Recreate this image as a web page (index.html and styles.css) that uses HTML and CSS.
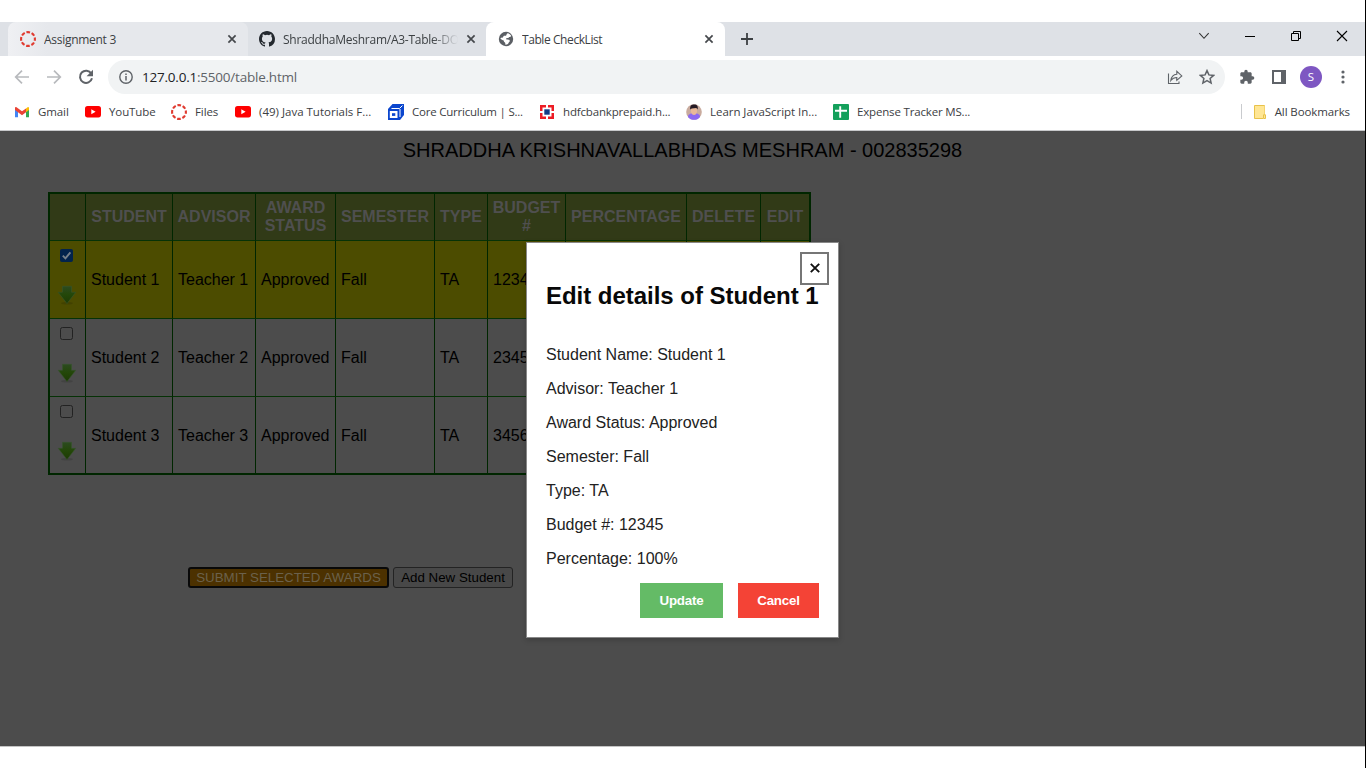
FILE: index.html
```html
<!DOCTYPE html>
<html lang="en">
<head>
<meta charset="utf-8">
<title>Table CheckList</title>
<link rel="stylesheet" href="styles.css">
</head>
<body>
<svg width="0" height="0" class="defs">
  <defs>
    <linearGradient id="leaf" x1="0" y1="0" x2="0" y2="1"><stop offset="0" stop-color="#2c4a20"/><stop offset=".5" stop-color="#234708"/><stop offset="1" stop-color="#1d3a05"/></linearGradient>
    <symbol id="ring" viewBox="0 0 16 16"><circle cx="8" cy="8" r="6.9" fill="none" stroke="#e03a2f" stroke-width="2.1" stroke-dasharray="3.7 1.72" stroke-dashoffset="1.85"/></symbol>
    <symbol id="yt" viewBox="0 0 16 12"><rect width="16" height="11.4" rx="2.6" fill="#f00"/><path d="M6.3 3.2v5l4.3-2.5z" fill="#fff"/></symbol>
    <symbol id="close" viewBox="0 0 10 10"><path d="M1.4 1.4l7.200 7.200M8.600 1.400L1.400 8.600" stroke="#45484c" stroke-width="1.700"/></symbol>
    <symbol id="down" viewBox="0 0 20 20"><ellipse cx="10" cy="18.200" rx="6" ry="1.400" fill="#000" opacity=".12"/><path d="M5.500 1.300h9v6h4.200L10 18.600 1.200 7.300h4.300z" fill="url(#leaf)" stroke="#36542b" stroke-width=".6"/></symbol>
  </defs>
</svg>
<div class="screen">
  <header class="tabs">
    <div class="tab first"><svg class="i16"><use href="#ring"/></svg><span class="t-assign">Assignment 3</span><svg class="x"><use href="#close"/></svg></div>
    <div class="tab second"><svg class="i16" viewBox="0 0 16 16"><path fill="#24292f" d="M8 0C3.58 0 0 3.58 0 8c0 3.54 2.29 6.53 5.47 7.59.4.07.55-.17.55-.38 0-.19-.01-.82-.01-1.49-2.01.37-2.53-.49-2.69-.94-.09-.23-.48-.94-.82-1.13-.28-.15-.68-.52-.01-.53.63-.01 1.08.58 1.23.82.72 1.21 1.87.87 2.33.66.07-.52.28-.87.51-1.07-1.78-.2-3.64-.89-3.64-3.95 0-.87.31-1.59.82-2.15-.08-.2-.36-1.02.08-2.12 0 0 .67-.21 2.2.82a7.6 7.6 0 014 0c1.53-1.04 2.2-.82 2.2-.82.44 1.1.16 1.92.08 2.12.51.56.82 1.27.82 2.15 0 3.07-1.87 3.75-3.65 3.95.29.25.54.73.54 1.48 0 1.07-.01 1.93-.01 2.2 0 .21.15.46.55.38A8.01 8.01 0 0016 8c0-4.42-3.58-8-8-8z"/></svg><span class="t-repo">ShraddhaMeshram/A3-Table-DOM</span><svg class="x"><use href="#close"/></svg></div>
    <div class="tab active"><svg class="i16" viewBox="0 0 16 16"><circle cx="8" cy="8" r="7.200" fill="#5b5f64"/><path d="M10 2.300c1.300.4 2.400 1.300 3.200 2.500-.3 1.200-1.200 1.200-2 1.300-.4 1.100-1.300 1-2.700 1.200-.8.300-.5 1.200.3 1.200 1.500 0 2.800.2 3 1.300.2 1.200-1.100 1.200-1.300 2.200-.3 1.100-1.700 1.800-3 1.700-.5-.7.200-1.500-.6-2.200-.9-.5-1.300-1.200-1.100-2.100-1.300 0-2.400-.6-3.500-2.100.4-1 1.600-.5 2.500-.9.7-.5.400-1.400 1.300-1.700.9-.1 1.500.3 2.100-.3.500-.6.300-1.800 1.800-2.100z" fill="#fff"/></svg><span class="t-table">Table CheckList</span><svg class="x"><use href="#close"/></svg></div>
    <svg class="plus" viewBox="0 0 12 12"><path d="M6 0v12M0 6h12" stroke="#3c4043" stroke-width="1.8"/></svg>
    <div class="win">
      <svg viewBox="0 0 12 8"><path d="M1.300 1.200L6 6.300l4.700-5.100" fill="none" stroke="#333" stroke-width="1.100"/></svg>
      <svg viewBox="0 0 12 8"><path d="M1 4.500h10" stroke="#000"/></svg>
      <svg viewBox="0 0 12 12"><path d="M1.500 3.500h7v7h-7zM3.500 3.500v-2h7v7h-2" fill="none" stroke="#000"/></svg>
      <svg viewBox="0 0 12 12"><path d="M1 1l10 10M11 1L1 11" stroke="#000" stroke-width="1.100"/></svg>
    </div>
  </header>
  <div class="toolbar">
    <svg class="nav" viewBox="0 0 16 16"><path d="M15 8H2M8 1.700L1.700 8 8 14.300" fill="none" stroke="#b8babd" stroke-width="1.700"/></svg>
    <svg class="nav" viewBox="0 0 16 16"><path d="M1 8h13M8 1.700L14.300 8 8 14.300" fill="none" stroke="#b8babd" stroke-width="1.700"/></svg>
    <svg class="nav" viewBox="0 0 16 16"><path d="M13.300 4.600A6.100 6.100 0 1 0 14 9.300" fill="none" stroke="#5f6368" stroke-width="2"/><path d="M15 .8v6.400H8.600z" fill="#5f6368"/></svg>
    <div class="omni">
      <svg class="info" viewBox="0 0 14 14"><circle cx="7" cy="7" r="6.200" fill="none" stroke="#5f6368" stroke-width="1.400"/><path d="M7 6v4.500M7 3.400v1.500" stroke="#5f6368" stroke-width="1.500"/></svg>
      <span class="url">127.0.0.1<i>:5500/table.html</i></span>
      <svg class="share" viewBox="0 0 16 16"><path d="M1.500 4.500v10h10.500v-2M3.800 11.500c.5-3.800 2.400-6 6-6.300V2.300l5 4.600-5 4.400V8.500c-2.600 0-4.400.9-6 3z" fill="none" stroke="#5f6368" stroke-width="1.100"/></svg>
      <svg class="star" viewBox="0 0 16 16"><path d="M8 1.600l1.900 4.300 4.700.5-3.500 3.100 1 4.600L8 11.700l-4.100 2.400 1-4.600-3.500-3.100 4.700-.5z" fill="none" stroke="#5f6368" stroke-width="1.500"/></svg>
    </div>
    <svg class="i16 puzzle" viewBox="0 0 24 24"><path fill="#5f6368" d="M20.500 11H19V7c0-1.100-.9-2-2-2h-4V3.500a2.500 2.500 0 0 0-5 0V5H4c-1.100 0-2 .9-2 2v3.800h1.500a2.700 2.700 0 0 1 0 5.400H2V20c0 1.100.9 2 2 2h3.800v-1.500a2.700 2.700 0 0 1 5.400 0V22H17c1.100 0 2-.9 2-2v-4h1.500a2.500 2.500 0 0 0 0-5z"/></svg>
    <svg class="panel" viewBox="0 0 14 14"><path fill="#5f6368" fill-rule="evenodd" d="M0 0h14v14H0zM2 2v10h7V2z"/></svg>
    <span class="avatar">S</span>
    <svg class="dots" viewBox="0 0 4 14"><g fill="#5f6368"><circle cx="2" cy="2" r="1.600"/><circle cx="2" cy="7" r="1.600"/><circle cx="2" cy="12" r="1.600"/></g></svg>
  </div>
  <nav class="bookmarks">
    <a class="b1"><svg class="i16" viewBox="0 0 16 16"><path d="M1 3.500v9.700h3V7z" fill="#4285f4"/><path d="M15 3.500v9.700h-3V7z" fill="#34a853"/><path d="M12 4.500l1.600-1.300c.8-.4 1.400 0 1.400 1V6l-3 2.200z" fill="#fbbc04"/><path d="M1 6V4.200c0-1 .8-1.400 1.500-1L8 7.300l4-2.900v3.800L8 11.200 4 8.200z" fill="#ea4335"/></svg><span>Gmail</span></a>
    <a class="b2"><svg class="i16 yt"><use href="#yt"/></svg><span>YouTube</span></a>
    <a class="b3"><svg class="i16"><use href="#ring"/></svg><span>Files</span></a>
    <a class="b4"><svg class="i16 yt"><use href="#yt"/></svg><span>(49) Java Tutorials F...</span></a>
    <a class="b5"><svg class="i16" viewBox="0 0 16 16"><path d="M4.500 0H16v11l-4 5H0V5z" fill="#0b46ce"/><path d="M3.500 4.500h8L14.500 1.500M12 5v8" stroke="#fff" stroke-width="1" fill="none"/><path d="M1.800 7h7.700v7H1.800z" fill="#fff"/><path d="M4 9.200h3.300v2.700H4z" fill="#0b46ce"/></svg><span>Core Curriculum | S...</span></a>
    <a class="b6"><svg class="i16" viewBox="0 0 16 16"><path d="M1 1h14v14H1z" fill="#ed1c24"/><path d="M3.500 3.500h9v9h-9z" fill="#fff"/><path d="M7 1h2v3H7zM7 12h2v3H7zM1 7h3v2H1zM12 7h3v2h-3z" fill="#fff"/><path d="M5.300 5.300h5.400v5.400H5.300z" fill="#133b86"/></svg><span>hdfcbankprepaid.h...</span></a>
    <a class="b7"><svg class="i16" viewBox="0 0 16 16"><circle cx="8" cy="8" r="7.800" fill="#c9ab9e"/><path d="M2 13c0-3 3-4 6-4s6 1 6 4c-1.500 2-3.500 2.800-6 2.800S3.500 15 2 13z" fill="#8b68f2"/><path d="M5 3.500h6v4c0 2-1.500 3.500-3 3.500S5 9.500 5 7.500z" fill="#e9b899"/><path d="M4.300 5.500C3.500 1.500 6 .3 8.500.5c2.500 0 4 2 3 5L10.300 4l-4.600.4z" fill="#251a24"/></svg><span>Learn JavaScript In...</span></a>
    <a class="b8"><svg class="i16" viewBox="0 0 16 16"><rect width="16" height="16" rx="1" fill="#13a05b"/><path d="M7.200 2.200v11.600M2 6.800h12" stroke="#fff" stroke-width="1.900"/></svg><span>Expense Tracker MS...</span></a>
    <a class="all"><svg class="folder" viewBox="0 0 12 14"><path d="M.5.500h10v9.500M.5.500v13h8.500" fill="#ffe694" stroke="#e8c24a"/><path d="M1 1h9.500v8.500L9 13H1z" fill="#ffe694"/><path d="M9.500 9.800h2v3.700h-2z" fill="#ffe694" stroke="#e8c24a"/></svg><span>All Bookmarks</span></a>
  </nav>
  <main class="page">
    <h1>SHRADDHA KRISHNAVALLABHDAS MESHRAM - 002835298</h1>
    <div class="grid">
      <div class="row head"><b></b><b>STUDENT</b><b>ADVISOR</b><b>AWARD STATUS</b><b>SEMESTER</b><b>TYPE</b><b>BUDGET #</b><b>PERCENTAGE</b><b>DELETE</b><b>EDIT</b></div>
      <div class="row picked"><div class="sel"><svg class="check" viewBox="0 0 13 13"><rect width="13" height="13" rx="2" fill="#02234c"/><path d="M2.800 6.700l2.600 2.700 5-6" fill="none" stroke="#77808a" stroke-width="1.900"/></svg><svg class="arrow"><use href="#down"/></svg></div><div>Student 1</div><div>Teacher 1</div><div>Approved</div><div>Fall</div><div>TA</div><div>12345</div><div></div><div></div><div></div></div>
      <div class="row"><div class="sel"><span class="check empty"></span><svg class="arrow"><use href="#down"/></svg></div><div>Student 2</div><div>Teacher 2</div><div>Approved</div><div>Fall</div><div>TA</div><div>23456</div><div></div><div></div><div></div></div>
      <div class="row last"><div class="sel"><span class="check empty"></span><svg class="arrow"><use href="#down"/></svg></div><div>Student 3</div><div>Teacher 3</div><div>Approved</div><div>Fall</div><div>TA</div><div>34567</div><div></div><div></div><div></div></div>
    </div>
    <div class="actions"><button class="submit">SUBMIT SELECTED AWARDS</button><button class="add">Add New Student</button></div>
    <section class="modal">
      <button class="dismiss"><svg viewBox="0 0 10 10"><path d="M.8.800l8.400 8.400M9.200.800L.8 9.200" stroke="#111" stroke-width="1.900"/></svg></button>
      <h2>Edit details of Student 1</h2>
      <p>Student Name: Student 1</p><p>Advisor: Teacher 1</p><p>Award Status: Approved</p><p>Semester: Fall</p><p>Type: TA</p><p>Budget #: 12345</p><p>Percentage: 100%</p>
      <footer><button class="update">Update</button><button class="cancel">Cancel</button></footer>
    </section>
  </main>
</div>
</body>
</html>
```
FILE: styles.css
```css
* { box-sizing: border-box; }
body { margin: 0; background: #fff; font-family: "Liberation Sans", sans-serif; overflow: hidden; }
svg { display: block; flex: none; }
.defs { position: absolute; }
.screen { width: 1366px; height: 768px; padding-top: 22px; border-right: 1px solid #000; }
.i16 { width: 16px; height: 16px; }

.tabs, .toolbar, .bookmarks { font-family: "Open Sans", sans-serif; font-size: 12px; color: #3c4043; display: flex; align-items: center; white-space: nowrap; }
.tabs { height: 34px; background: #dee1e6; padding-left: 8px; }
.tab { height: 34px; display: flex; align-items: center; width: 239px; padding: 0 9px 0 12px; }
.tab span { margin-left: 8px; flex: 1; overflow: hidden; }
.tab .x { width: 10px; height: 10px; margin-left: 8px; }
.first { background: linear-gradient(90deg, #eff0f3, #e6e8ec 40px); border-radius: 8px 8px 0 0; width: 240px; padding-right: 11px; }
.second { width: 238px; padding-left: 11px; padding-right: 10px; }
.t-assign { letter-spacing: -0.28px; }
.t-repo { letter-spacing: -0.25px; -webkit-mask-image: linear-gradient(90deg, #000 85%, transparent); mask-image: linear-gradient(90deg, #000 85%, transparent); }
.t-table { letter-spacing: -0.42px; }
.active { background: #fff; border-radius: 8px 8px 0 0; padding-right: 11px; }
.plus { width: 12px; height: 12px; margin-left: 16px; }
.win { display: flex; align-items: center; gap: 34px; margin-left: auto; margin-right: 17px; margin-bottom: 6px; }
.win svg { width: 12px; }

.toolbar { height: 42px; padding-left: 14px; }
.nav { width: 16px; height: 16px; margin-right: 16px; }
.omni { width: 1117px; height: 34px; margin-left: -2px; border-radius: 17px; background: #f1f3f4; display: flex; align-items: center; padding-left: 11px; }
.info { width: 14px; height: 14px; }
.url { font-size: 13.5px; margin-left: 9px; color: #202124; letter-spacing: -0.22px; }
.url i { font-style: normal; color: #5f6368; }
.share { width: 16px; height: 16px; margin-left: auto; }
.star { width: 16px; height: 16px; margin-left: 16px; margin-right: 10px; }
.puzzle { margin-left: 14px; }
.panel { width: 14px; height: 14px; margin-left: 17px; }
.avatar { width: 22px; height: 22px; border-radius: 50%; background: #7e57c2; color: #fff; text-align: center; line-height: 22px; font-size: 11.5px; margin-left: 14px; }
.dots { width: 4px; height: 14px; margin-left: 19px; }

.bookmarks { height: 33px; padding: 0 15px 5px 14px; border-bottom: 1px solid #c8c9cb; font-size: 11.5px; letter-spacing: -0.1px; }
.bookmarks a { display: flex; align-items: center; }
.bookmarks span { margin-left: 8px; }
.b1 { width: 71px; }
.b2 { width: 86px; }
.b3 { width: 64px; }
.b4 { width: 153px; letter-spacing: 0; }
.b5 { width: 151px; letter-spacing: -0.22px; }
.b6 { width: 147px; letter-spacing: -0.16px; }
.b7 { width: 147px; letter-spacing: -0.04px; }
.b8 { letter-spacing: -0.17px; }
.bookmarks .all { margin-left: auto; border-left: 1px solid #c9cbce; padding-left: 12px; }
.folder { width: 12px; height: 14px; }
.bookmarks .all span { margin-left: 9px; }

.page { position: relative; height: 616px; background: #4c4c4c; border-bottom: 1px solid #c4c4c4; color: #000; }
h1 { margin: 0; padding-top: 7px; font-size: 20px; line-height: 24px; font-weight: 400; text-align: center; }
.grid { width: 763px; margin: 30px 0 0 48px; border: 2px solid #002600; }
.row { display: grid; grid-template-columns: 36px 87px 83px 80px 99px 53px 78px 121px 74px 48px; height: 78px; font-size: 16px; }
.row > * { border-right: 1px solid #002600; border-bottom: 1px solid #063206; padding-left: 5px; display: flex; align-items: center; white-space: nowrap; overflow: hidden; }
.row > :last-child { border-right: 0; }
.head { height: 47px; background: #313a17; color: #4f4f4f; line-height: 18px; }
.head > * { padding: 0 5px; justify-content: center; text-align: center; white-space: normal; }
.picked { background: #4c4c00; }
.last { height: 76px; }
.last > * { border-bottom: 0; padding-top: 1px; }
.row .sel { flex-direction: column; align-items: flex-start; padding: 8px 0 0 7px; }
.check { width: 13px; height: 13px; margin-left: 3px; flex: none; }
.empty { border: 1px solid #222; border-radius: 2.500px; background: #4c4c4c; }
.arrow { width: 20px; height: 20px; margin-top: 23px; }
.actions { display: flex; gap: 4px; margin: 92px 0 0 188px; }
button { font-family: "Liberation Sans", sans-serif; }
.actions button { height: 21px; padding: 0; font-size: 13.333px; line-height: 17px; border-radius: 3px; }
.submit { width: 201px; background: #4c3100; border: 2px solid #090909; color: #6b614c; }
.add { width: 120px; background: #484848; border: 1px solid #232323; color: #000; }

.modal { position: absolute; left: 526px; top: 111px; width: 313px; height: 396px; background: #fff; border: 1px solid #888; padding: 39px 19px 19px; box-shadow: 0 2px 6px rgba(0,0,0,.2); }
.dismiss { position: absolute; right: 9px; top: 9px; width: 29px; height: 33px; border: 2px solid #767676; background: #fff; display: flex; align-items: center; justify-content: center; padding: 0 0 2px; }
.dismiss svg { width: 10px; height: 10px; }
.modal h2 { position: relative; margin: 0 0 36px; font-size: 24px; line-height: 28px; white-space: nowrap; color: #080808; letter-spacing: -0.03px; }
.modal p { margin: 0 0 16px; font-size: 16px; line-height: 18px; color: #222; }
.modal footer { display: flex; justify-content: flex-end; gap: 15px; margin-top: -17px; padding-top: 16px; }
.modal footer button { height: 35px; border: 0; padding: 0; color: #fff; font-size: 13.333px; font-weight: 700; letter-spacing: -0.2px; }
.update { width: 83px; background: #64bb66; }
.cancel { width: 81px; background: #f44336; }
```
